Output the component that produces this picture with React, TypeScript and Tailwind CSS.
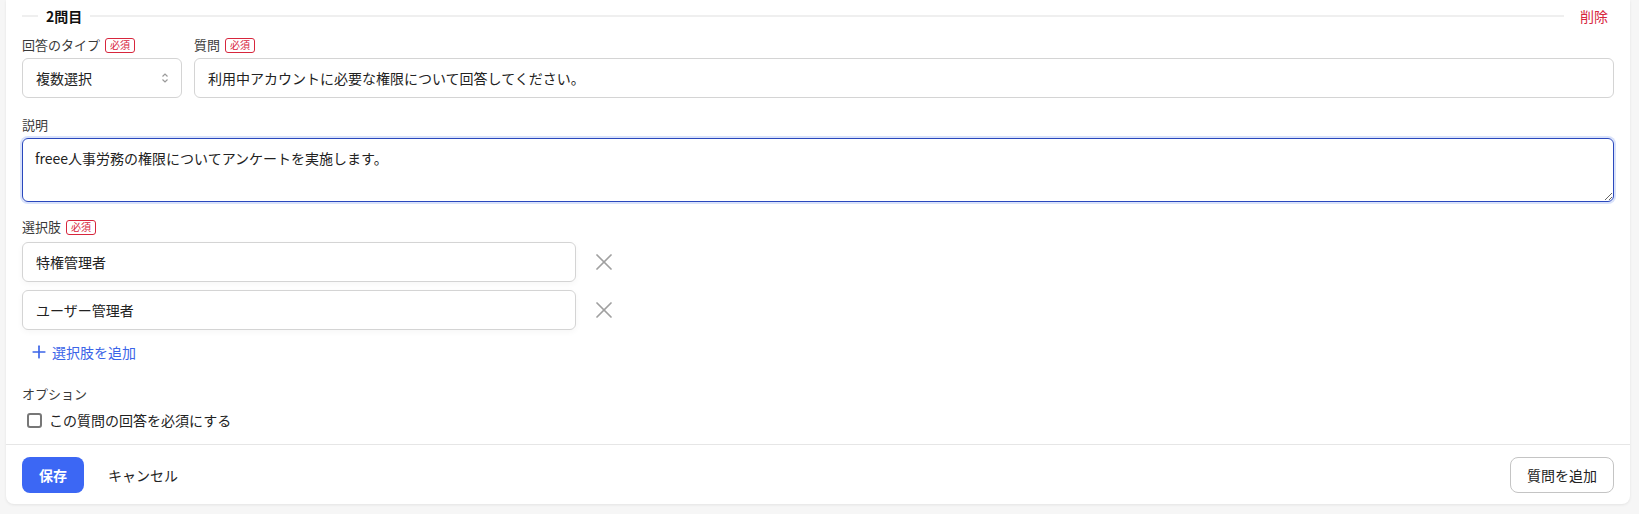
import { Plus, X } from 'lucide-react';

const choices = ['特権管理者', 'ユーザー管理者'];

const font = { fontFamily: '"Noto Sans CJK JP", "Noto Sans", sans-serif' };

function Required() {
  return (
    <span className="ml-[5px] inline-flex h-[15px] items-center rounded-[3px] border border-[#d7263d] px-[4px] text-[10px] leading-none text-[#d7263d]">
      必須
    </span>
  );
}

function FieldLabel({ text, required }: { text: string; required?: boolean }) {
  return (
    <div className="flex h-[18px] items-center text-[13px] leading-[18px] text-[#3a3a3a]">
      {text}
      {required && <Required />}
    </div>
  );
}

function SortIcon() {
  return (
    <svg width="8" height="12" viewBox="0 0 8 12" fill="none" stroke="#9a9a9a" strokeWidth="1.2">
      <path d="M1.5 4.5 4 2l2.5 2.5" />
      <path d="M1.5 7.5 4 10l2.5-2.5" />
    </svg>
  );
}

export default function App() {
  return (
    <div className="min-h-[514px] w-full bg-[#f6f6f6] pl-[6px] pr-[9px]" style={font}>
      <div className="rounded-b-lg bg-white shadow-[0_1px_3px_rgba(0,0,0,0.08)]">
        <div className="px-4">
          {/* question header */}
          <div className="flex h-8 items-center">
            <div className="h-[2px] w-4 bg-[#efefef]" />
            <span className="px-2 text-[14px] font-bold text-[#111]">2問目</span>
            <div className="h-[2px] flex-1 bg-[#efefef]" />
            <button className="pl-4 pr-[6px] text-[14px] text-[#d7263d]">削除</button>
          </div>

          {/* type + question */}
          <div className="mt-1 flex gap-3">
            <div className="w-[160px]">
              <FieldLabel text="回答のタイプ" required />
              <div className="mt-1 flex h-10 items-center justify-between rounded-md border border-[#d4d4d4] pl-[13px] pr-[12px] text-[14px] text-[#222]">
                複数選択
                <SortIcon />
              </div>
            </div>
            <div className="flex-1">
              <FieldLabel text="質問" required />
              <div className="mt-1 flex h-10 items-center rounded-md border border-[#d4d4d4] px-[13px] text-[14px] text-[#222]">
                利用中アカウントに必要な権限について回答してください。
              </div>
            </div>
          </div>

          {/* description */}
          <div className="mt-[18px]">
            <FieldLabel text="説明" />
            <textarea
              readOnly
              defaultValue="freee人事労務の権限についてアンケートを実施します。"
              className="mt-1 block h-16 w-full resize-y rounded-md border-[1.5px] border-[#2a48bd] px-[12px] py-[9px] text-[14px] leading-[20px] text-[#222] shadow-[0_0_0_2px_#d9e2fb] outline-none"
              style={font}
            />
          </div>

          {/* choices */}
          <div className="mt-4">
            <FieldLabel text="選択肢" required />
            <div className="mt-[6px] flex flex-col gap-2">
              {choices.map((c) => (
                <div key={c} className="flex items-center">
                  <div className="flex h-10 w-[554px] items-center rounded-md border border-[#d4d4d4] px-[13px] text-[14px] text-[#222] shadow-[0_2px_6px_rgba(0,0,0,0.04)]">
                    {c}
                  </div>
                  <X className="ml-[14px] text-[#a0a0a0]" size={28} strokeWidth={1.5} />
                </div>
              ))}
            </div>
            <button className="mt-[10px] flex h-6 items-center gap-[3px] pl-[7px] text-[14px] text-[#3b64e8]">
              <Plus size={20} strokeWidth={2} />
              選択肢を追加
            </button>
          </div>

          {/* options */}
          <div className="mt-[21px] pb-[15px]">
            <div className="text-[13px] leading-[18px] text-[#3a3a3a]">オプション</div>
            <label className="mt-2 flex h-[18px] items-center gap-[7px] pl-[5px] text-[14px] text-[#222]">
              <span className="block h-[15px] w-[15px] rounded-[3px] border-2 border-[#777]" />
              この質問の回答を必須にする
            </label>
          </div>
        </div>

        {/* footer actions */}
        <div className="flex items-center justify-between border-t border-[#e6e6e6] px-4 pb-[11px] pt-3">
          <div className="flex items-center gap-6">
            <button className="h-9 w-[62px] rounded-lg bg-[#3c67f4] text-[14px] font-bold text-white">保存</button>
            <button className="text-[14px] text-[#222]">キャンセル</button>
          </div>
          <button className="h-9 w-[104px] rounded-lg border border-[#c4c4c4] text-[14px] text-[#222]">質問を追加</button>
        </div>
      </div>
    </div>
  );
}
